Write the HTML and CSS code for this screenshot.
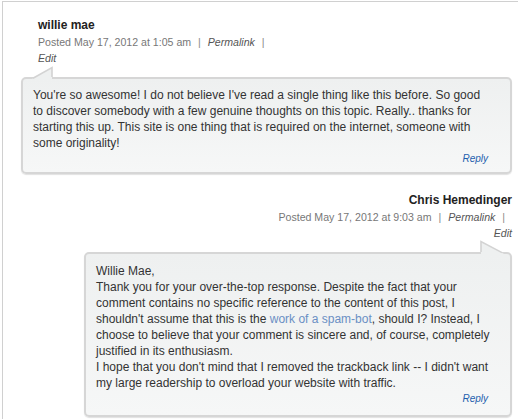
FILE: index.html
```html
<!DOCTYPE html>
<html>
<head>
<meta charset="utf-8">
<link rel="stylesheet" href="styles.css">
</head>
<body>
<div class="frame">
  <div class="comment">
    <div class="head">
      <div class="name">willie mae</div>
      <div class="meta">Posted May 17, 2012 at 1:05 am <span class="sep">|</span> <span class="em">Permalink</span> <span class="sep">|</span></div>
      <div class="meta"><span class="em">Edit</span></div>
    </div>
    <div class="bubble">
      <svg class="tail tail-left" width="22" height="13" viewBox="0 0 22 13">
        <polygon points="0,13 20,1.5 20,13" fill="#eef0f0"/>
        <polyline points="1,12.2 20,1.5 20,11" fill="none" stroke="#d3d3d3" stroke-width="1.6"/>
      </svg>
      <p>You're so awesome! I do not believe I've read a single thing like this before. So good to discover somebody with a few genuine thoughts on this topic. Really.. thanks for starting this up. This site is one thing that is required on the internet, someone with some originality!</p>
      <div class="reply">Reply</div>
    </div>
  </div>
  <div class="comment author">
    <div class="head">
      <div class="name">Chris Hemedinger</div>
      <div class="meta">Posted May 17, 2012 at 9:03 am <span class="sep">|</span> <span class="em">Permalink</span> <span class="sep">|</span>&nbsp;</div>
      <div class="meta"><span class="em">Edit</span></div>
    </div>
    <div class="bubble">
      <svg class="tail tail-right" width="25" height="14" viewBox="0 0 25 14">
        <polygon points="2,1.5 25,14 2,14" fill="#eef0f0"/>
        <polyline points="2,12 2,1.5 23,12.6" fill="none" stroke="#d3d3d3" stroke-width="1.6"/>
      </svg>
      <p>Willie Mae,<br>Thank you for your over-the-top response. Despite the fact that your comment contains no specific reference to the content of this post, I shouldn't assume that this is the <a href="#">work of a spam-bot</a>, should I? Instead, I choose to believe that your comment is sincere and, of course, completely justified in its enthusiasm.<br>I hope that you don't mind that I removed the trackback link -- I didn't want my large readership to overload your website with traffic.</p>
      <div class="reply">Reply</div>
    </div>
  </div>
</div>
</body>
</html>
```

FILE: styles.css
```css
html, body {
  margin: 0;
  padding: 0;
  background: #fff;
  overflow: hidden;
}
body {
  font-family: "Liberation Sans", Arial, sans-serif;
  color: #333;
}
.frame {
  margin: 1px 0 0 2px;
  border-top: 1px solid #d0d0d0;
  border-left: 1px solid #d0d0d0;
  padding: 15px 6px 0 18px;
  height: 420px;
}
.head {
  padding-left: 17px;
}
.name {
  font-size: 12px;
  font-weight: bold;
  line-height: 17px;
  color: #222;
}
.meta {
  font-size: 10.6px;
  line-height: 16px;
  color: #777;
}
.sep {
  margin: 0 4px;
  color: #888;
}
.em {
  font-style: italic;
  color: #555;
}
.bubble {
  position: relative;
  margin-top: 11px;
  border: 2px solid #d6d6d6;
  border-radius: 5px;
  background: linear-gradient(#eef0f0, #f6f7f7);
  box-shadow: 0 1px 1px rgba(0, 0, 0, 0.12);
  padding: 8px 19px 5px 10px;
}
.bubble p {
  margin: 0;
  font-size: 12px;
  line-height: 16px;
  color: #333;
}
.bubble a {
  color: #6a8fc4;
  text-decoration: none;
}
.reply {
  text-align: right;
  margin-right: 3px;
  font-size: 10px;
  font-style: italic;
  line-height: 16px;
  color: #1f5fae;
}
.tail {
  position: absolute;
  display: block;
}
.tail-left {
  top: -13px;
  left: 9px;
}
.tail-right {
  top: -14px;
  right: 6px;
}
.comment + .comment {
  margin-top: 18px;
}
.author {
  padding-left: 63px;
}
.author .head {
  padding-left: 0;
  text-align: right;
}
.author .bubble {
  margin-top: 11px;
  padding: 9px 10px 8px 10px;
}
.author .reply {
  margin-right: 12px;
}
```
